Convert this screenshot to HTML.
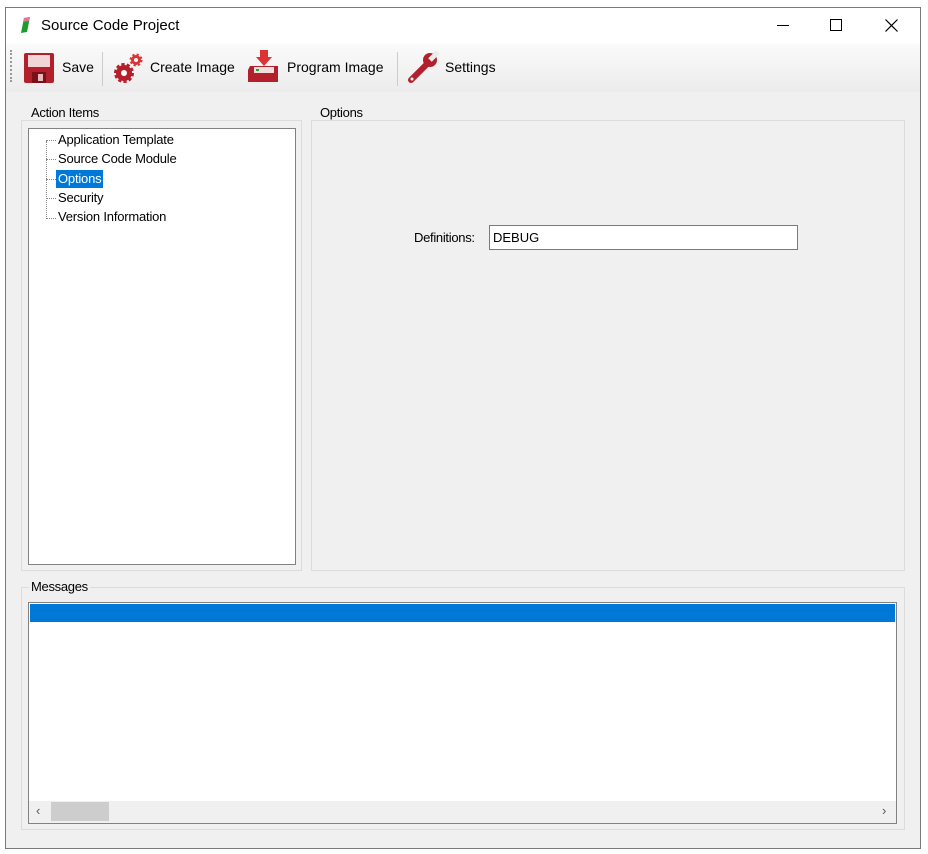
<!DOCTYPE html>
<html><head><style>
*{box-sizing:border-box;margin:0;padding:0}
body{width:928px;height:854px;background:#fff;position:relative;font-family:"Liberation Sans",sans-serif;font-size:13px;color:#000;overflow:hidden}
.a{position:absolute}
.win{left:5px;top:7px;width:916px;height:842px;border:1px solid #7a7a7a;background:#f0f0f0}
.grp{border:1px solid #dcdcdc}
.lbl{background:#f0f0f0;padding:0 2px;font-size:13px;letter-spacing:-0.3px}
.tree div{position:absolute;left:30px;font-size:13px;letter-spacing:-0.2px;white-space:nowrap}
</style></head><body>
<div class="a win"></div>
<!-- title bar -->
<div class="a" style="left:6px;top:8px;width:914px;height:36px;background:#fff"></div>
<svg class="a" style="left:18px;top:16px" width="16" height="18" viewBox="0 0 16 18"><path d="M6 2 L12 1 L9 16 L3 17Z" fill="#1c9a2c"/><path d="M6 2 L12 1 L11 5 L5 6Z" fill="#d9799a"/></svg>
<div class="a" style="left:41px;top:17px;font-size:15px">Source Code Project</div>
<div class="a" style="left:777px;top:25px;width:12px;height:1px;background:#000"></div>
<div class="a" style="left:830px;top:19px;width:12px;height:12px;border:1px solid #000"></div>
<svg class="a" style="left:885px;top:19px" width="13" height="13"><path d="M0.5 0.5L12.5 12.5M12.5 0.5L0.5 12.5" stroke="#000" stroke-width="1.2"/></svg>
<!-- toolbar -->
<div class="a" style="left:6px;top:44px;width:914px;height:48px;background:linear-gradient(#fafafa,#ececec)"></div>
<div class="a" style="left:10px;top:50px;width:2px;height:32px;border-left:2px dotted #999"></div>
<svg class="a" style="left:23px;top:52px" width="32" height="32"><rect x="1" y="1" width="30" height="30" rx="2" fill="#b3202b"/><rect x="5" y="3" width="22" height="12" fill="#f1d6d8"/><rect x="9" y="20" width="14" height="11" fill="#7a1018"/><rect x="15" y="22" width="5" height="7" fill="#e8b9bc"/></svg>
<div class="a" style="left:62px;top:59px;font-size:14px">Save</div>
<div class="a" style="left:102px;top:52px;width:1px;height:34px;background:#ccc"></div>
<svg class="a" style="left:111px;top:51px" width="34" height="34"><circle cx="13" cy="22" r="8" fill="#b3202b" stroke="#b3202b" stroke-width="4" stroke-dasharray="3 2"/><circle cx="13" cy="22" r="3" fill="#fff"/><circle cx="25" cy="9" r="5" fill="#d33" stroke="#d33" stroke-width="3" stroke-dasharray="2 2"/><circle cx="25" cy="9" r="2" fill="#fff"/></svg>
<div class="a" style="left:150px;top:59px;font-size:14px">Create Image</div>
<svg class="a" style="left:246px;top:48px" width="36" height="36"><rect x="14" y="2" width="8" height="8" fill="#d33"/><path d="M10 9h16l-8 9z" fill="#d33"/><path d="M4 18h28v16H2V22z" fill="#b3202b"/><rect x="8" y="19" width="20" height="6" fill="#f3dede"/><rect x="10" y="21" width="3" height="2" fill="#2a2"/></svg>
<div class="a" style="left:287px;top:59px;font-size:14px">Program Image</div>
<div class="a" style="left:397px;top:52px;width:1px;height:34px;background:#ccc"></div>
<svg class="a" style="left:406px;top:50px" width="34" height="34"><path d="M5 30L22 13" stroke="#b3202b" stroke-width="6" stroke-linecap="round"/><circle cx="24" cy="10" r="7" fill="#b3202b"/><path d="M24 10L32 2" stroke="#ececec" stroke-width="5"/><circle cx="6" cy="29" r="1.5" fill="#fff"/></svg>
<div class="a" style="left:445px;top:59px;font-size:14px">Settings</div>
<!-- Action items group -->
<div class="a grp" style="left:21px;top:120px;width:281px;height:451px"></div>
<div class="a lbl" style="left:29px;top:105px">Action Items</div>
<div class="a" style="left:28px;top:128px;width:268px;height:437px;background:#fff;border:1px solid #828282"></div>
<div class="a" style="left:46px;top:141px;width:0;height:78px;border-left:1px dotted #888"></div>
<div class="a tree" style="left:28px;top:128px;width:268px">
<div style="left:18px;top:12px;width:10px;border-top:1px dotted #888"></div><div style="top:4px">Application Template</div>
<div style="left:18px;top:31px;width:10px;border-top:1px dotted #888"></div><div style="top:23px">Source Code Module</div>
<div style="left:18px;top:51px;width:10px;border-top:1px dotted #888"></div><div style="top:42px;left:28px;background:#0078d7;color:#fff;padding:1px 2px 2px">Options</div>
<div style="left:18px;top:70px;width:10px;border-top:1px dotted #888"></div><div style="top:62px">Security</div>
<div style="left:18px;top:90px;width:10px;border-top:1px dotted #888"></div><div style="top:81px">Version Information</div>
</div>
<!-- Options group -->
<div class="a grp" style="left:311px;top:120px;width:594px;height:451px"></div>
<div class="a lbl" style="left:318px;top:105px">Options</div>
<div class="a" style="left:414px;top:230px;font-size:13px;letter-spacing:-0.3px">Definitions:</div>
<div class="a" style="left:489px;top:225px;width:309px;height:25px;background:#fff;border:1px solid #7a7a7a;padding:4px 3px;font-size:13px">DEBUG</div>
<!-- Messages -->
<div class="a grp" style="left:21px;top:587px;width:884px;height:243px"></div>
<div class="a lbl" style="left:29px;top:579px">Messages</div>
<div class="a" style="left:28px;top:602px;width:869px;height:222px;background:#fff;border:1px solid #828282"></div>
<div class="a" style="left:30px;top:604px;width:865px;height:18px;background:#0078d7"></div>
<div class="a" style="left:29px;top:801px;width:867px;height:22px;background:#f0f0f0"></div>
<div class="a" style="left:51px;top:802px;width:58px;height:19px;background:#cdcdcd"></div>
<div class="a" style="left:36px;top:803px;font-size:13px;color:#555">&#8249;</div>
<div class="a" style="left:882px;top:803px;font-size:13px;color:#555">&#8250;</div>
</body></html>
